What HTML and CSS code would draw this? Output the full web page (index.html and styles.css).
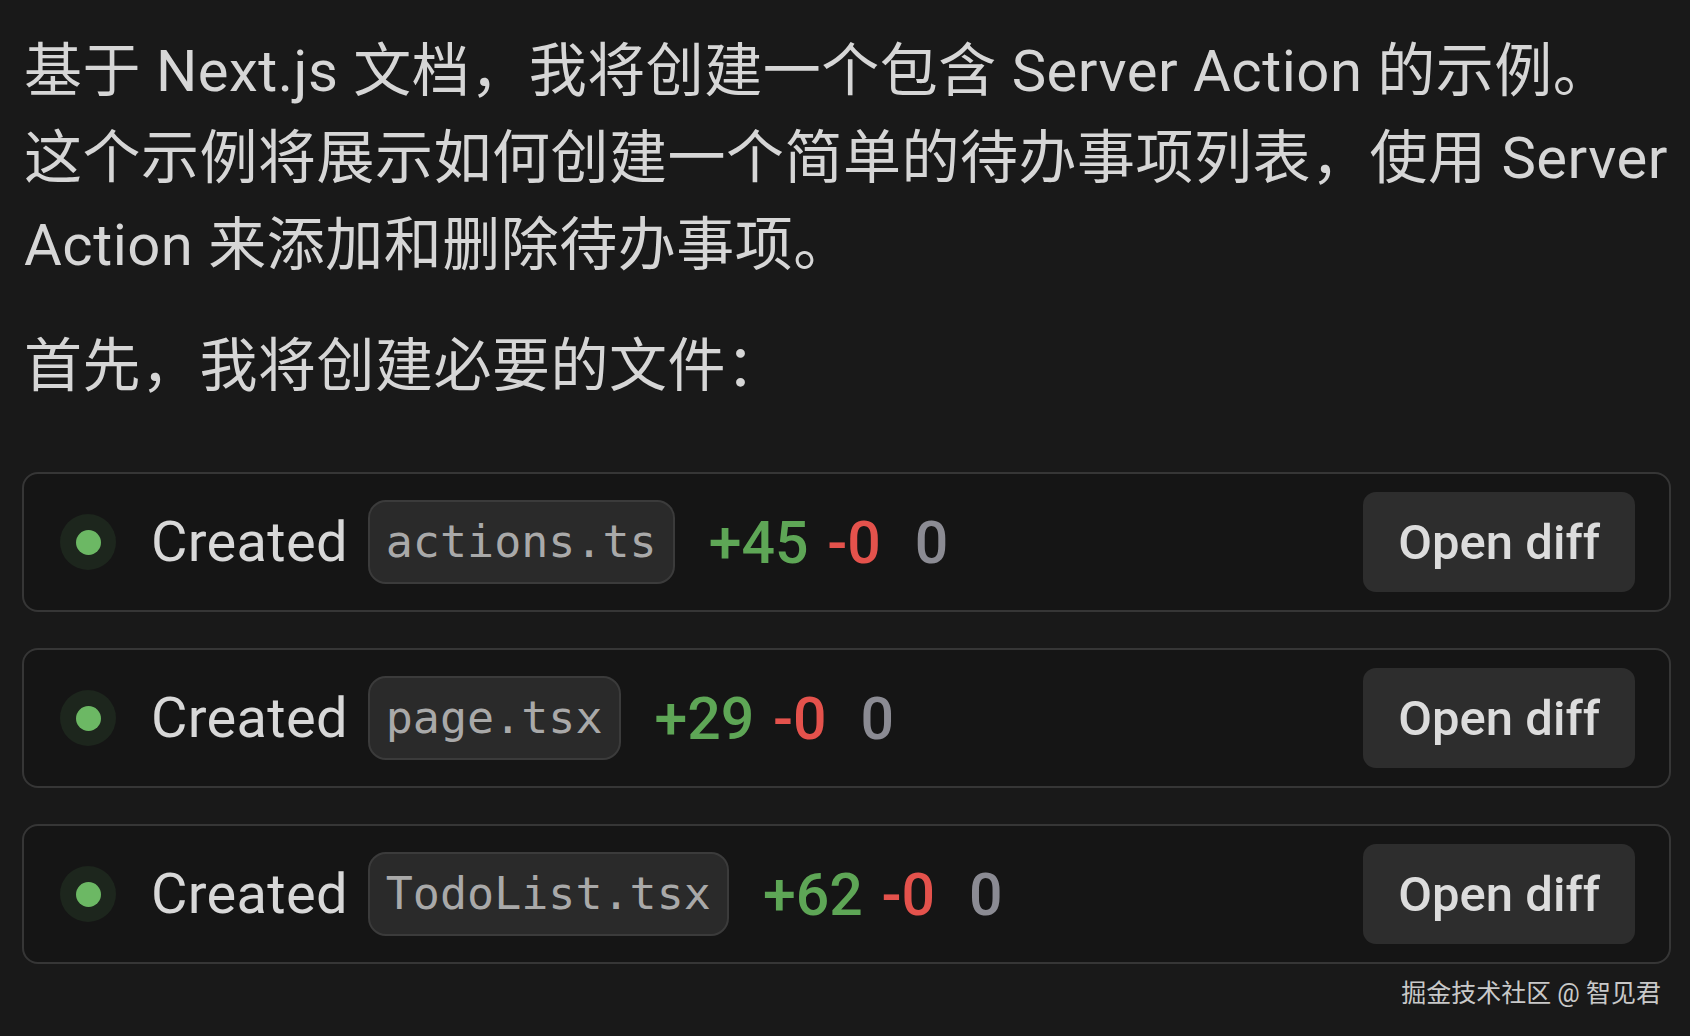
FILE: index.html
```html
<!DOCTYPE html>
<html lang="zh-CN">
<head>
<meta charset="utf-8">
<title>Server Action 示例</title>
<link rel="stylesheet" href="styles.css">
</head>
<body>
<main class="page">
  <p class="text">基于 Next.js 文档，我将创建一个包含 Server Action 的示例。<br>这个示例将展示如何创建一个简单的待办事项列表，使用 Server Action 来添加和删除待办事项。</p>
  <p class="text text-second">首先，我将创建必要的文件：</p>
  <ul class="files">
    <li class="file-card">
      <span class="dot"><span class="dot-core"></span></span>
      <span class="label">Created</span>
      <code class="file-name">actions.ts</code>
      <span class="stats"><span class="add">+45</span> <span class="del">-0</span></span>
      <span class="zero">0</span>
      <button class="open-diff">Open diff</button>
    </li>
    <li class="file-card">
      <span class="dot"><span class="dot-core"></span></span>
      <span class="label">Created</span>
      <code class="file-name">page.tsx</code>
      <span class="stats"><span class="add">+29</span> <span class="del">-0</span></span>
      <span class="zero">0</span>
      <button class="open-diff">Open diff</button>
    </li>
    <li class="file-card">
      <span class="dot"><span class="dot-core"></span></span>
      <span class="label">Created</span>
      <code class="file-name">TodoList.tsx</code>
      <span class="stats"><span class="add">+62</span> <span class="del">-0</span></span>
      <span class="zero">0</span>
      <button class="open-diff">Open diff</button>
    </li>
  </ul>
  <div class="watermark">掘金技术社区 @ 智见君</div>
</main>
</body>
</html>
```
FILE: styles.css
```css
html, body {
  margin: 0;
  padding: 0;
  background: #191919;
}

body {
  font-family: Roboto, "Noto Sans CJK SC", sans-serif;
  color: #d6d6d6;
}

.page {
  width: 1690px;
  height: 1036px;
  box-sizing: border-box;
  padding: 28px 19px 0 22px;
  overflow: hidden;
}

.text {
  margin: 0;
  padding-left: 2px;
  font-size: 58px;
  line-height: 87px;
  letter-spacing: 0.5px;
  color: #d6d6d6;
}

.text-second {
  margin-top: 34px;
}

.files {
  list-style: none;
  margin: 62px 0 0;
  padding: 0;
  display: flex;
  flex-direction: column;
  gap: 36px;
}

.file-card {
  height: 140px;
  box-sizing: border-box;
  border: 2px solid #363636;
  border-radius: 16px;
  background: #151515;
  display: flex;
  align-items: center;
  padding: 0 34px 0 36px;
}

.dot {
  width: 56px;
  height: 56px;
  border-radius: 50%;
  background: #1d261d;
  display: flex;
  align-items: center;
  justify-content: center;
  margin-right: 35px;
  flex: none;
}

.dot-core {
  width: 25px;
  height: 25px;
  border-radius: 50%;
  background: #6cb864;
}

.label {
  font-size: 56px;
  letter-spacing: 0.3px;
  color: #d8d8d8;
  margin-right: 20px;
}

.file-name {
  font-family: "DejaVu Sans Mono", "Liberation Mono", monospace;
  font-size: 45px;
  line-height: 56px;
  color: #a9a9a9;
  background: #2a2a2a;
  border: 2px solid #3b3b3b;
  border-radius: 18px;
  padding: 12px 16px;
}

.stats {
  margin-left: 34px;
  font-size: 59px;
  font-weight: 500;
  word-spacing: 4px;
}

.add {
  color: #5ea656;
}

.del {
  color: #e4524c;
}

.zero {
  margin-left: 34px;
  font-size: 59px;
  font-weight: 500;
  color: #8b8b93;
}

.open-diff {
  margin-left: auto;
  height: 100px;
  padding: 0 35px;
  border: none;
  border-radius: 13px;
  background: #2d2d2d;
  color: #dcdcdc;
  font-family: Roboto, "Noto Sans CJK SC", sans-serif;
  font-size: 49px;
  font-weight: 500;
}

.watermark {
  margin-top: 15px;
  padding-right: 10px;
  text-align: right;
  font-size: 25px;
  line-height: 30px;
  color: #c9c9c9;
}
```
